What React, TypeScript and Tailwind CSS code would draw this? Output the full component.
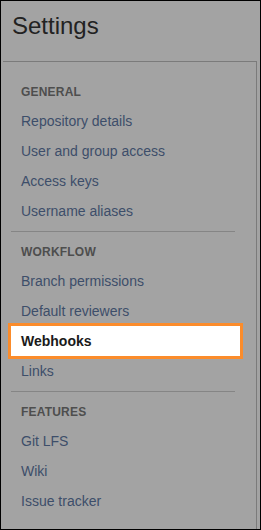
import React from "react";

type Section = { title: string; items: string[] };

const sections: Section[] = [
  {
    title: "GENERAL",
    items: ["Repository details", "User and group access", "Access keys", "Username aliases"],
  },
  {
    title: "WORKFLOW",
    items: ["Branch permissions", "Default reviewers", "Webhooks", "Links"],
  },
  {
    title: "FEATURES",
    items: ["Git LFS", "Wiki", "Issue tracker"],
  },
];

const ACTIVE = "Webhooks";

const App = () => {
  return (
    <div className="w-[261px] h-[530px] border border-black bg-[#a3a3a3] overflow-hidden font-['Liberation_Sans',Arial,sans-serif]">
      {/* Header */}
      <div className="h-[60px] pl-[11px] pt-[11px]">
        <h1 className="text-[24px] leading-[28px] text-[#222]">Settings</h1>
      </div>
      {/* End Header */}

      {/* Nav panel */}
      <div className="ml-[2px] mr-[3px] h-[470px] border-t border-r border-[#7b7b7b] pt-[14px] pl-[8px] pr-[21px]">
        {sections.map((section, i) => (
          <div key={section.title}>
            {i > 0 && <div className="h-px bg-[#858585] mt-[5px] mb-[4px]" />}
            <div className="h-[30px] flex items-center pl-[10px] pt-px text-[12px] font-bold text-[#4e4e4e] tracking-[0.2px]">
              {section.title}
            </div>
            {section.items.map((item) =>
              item === ACTIVE ? (
                <div
                  key={item}
                  className="h-[36px] -mt-[3px] -mb-[3px] -ml-[3px] -mr-[8px] flex items-center pl-[10px] border-[3px] border-[#fb8c2b] bg-white text-[14px] font-bold text-[#1a1a1a]"
                >
                  {item}
                </div>
              ) : (
                <div key={item} className="h-[30px] flex items-center pl-[10px] text-[14px] text-[#3d4e6a]">
                  {item}
                </div>
              )
            )}
          </div>
        ))}
      </div>
      {/* End Nav panel */}
    </div>
  );
};

export default App;
